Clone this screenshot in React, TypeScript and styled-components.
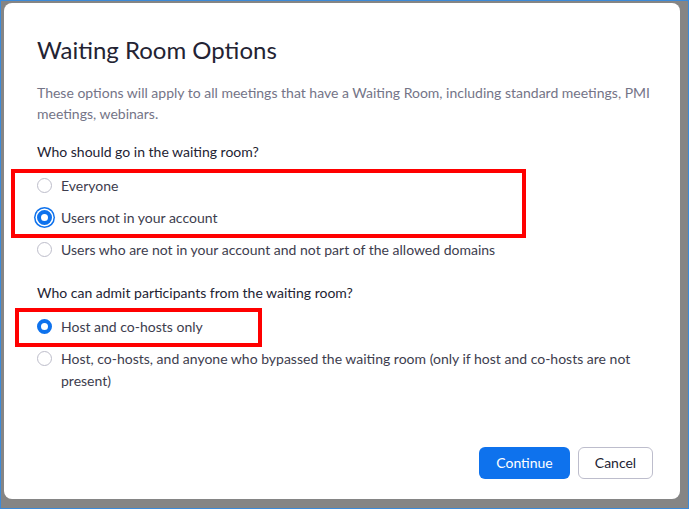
import styled, { createGlobalStyle } from "styled-components";

const GlobalStyle = createGlobalStyle`
  html, body {
    margin: 0;
    padding: 0;
  }
  body {
    font-family: Lato, "Open Sans", "Liberation Sans", sans-serif;
  }
`;

type Option = {
  label: string;
  checked?: boolean;
  focused?: boolean;
};

const waitingOptions: Option[] = [
  { label: "Everyone" },
  { label: "Users not in your account", checked: true, focused: true },
  { label: "Users who are not in your account and not part of the allowed domains" },
];

const admitOptions: Option[] = [
  { label: "Host and co-hosts only", checked: true },
  {
    label:
      "Host, co-hosts, and anyone who bypassed the waiting room (only if host and co-hosts are not present)",
  },
];

const App = () => {
  return (
    <>
      <GlobalStyle />
      <Frame>
        <Dialog>
          <Title>Waiting Room Options</Title>
          <Description>
            These options will apply to all meetings that have a Waiting Room, including standard
            meetings, PMI meetings, webinars.
          </Description>

          <SectionTitle>Who should go in the waiting room?</SectionTitle>
          <OptionList>
            {waitingOptions.map((o) => (
              <OptionRow key={o.label}>
                <Radio $checked={o.checked} $focused={o.focused} />
                <OptionText>{o.label}</OptionText>
              </OptionRow>
            ))}
          </OptionList>

          <SectionTitle $spaced>Who can admit participants from the waiting room?</SectionTitle>
          <OptionList>
            {admitOptions.map((o) => (
              <OptionRow key={o.label}>
                <Radio $checked={o.checked} $focused={o.focused} />
                <OptionText>{o.label}</OptionText>
              </OptionRow>
            ))}
          </OptionList>

          <Footer>
            <PrimaryButton>Continue</PrimaryButton>
            <SecondaryButton>Cancel</SecondaryButton>
          </Footer>

          {/* 빨간 강조 박스 (스크린샷 주석) */}
          <Highlight $left={7} $top={166} $width={515} $height={69} />
          <Highlight $left={11} $top={305} $width={247} $height={39} />
        </Dialog>
      </Frame>
    </>
  );
};

const Frame = styled.div`
  width: 689px;
  height: 509px;
  box-sizing: border-box;
  border: 1px solid #3c8ad8;
  background: #858585;
  padding: 2px 8px 9px 3px;
  display: flex;
`;

const Dialog = styled.div`
  position: relative;
  flex: 1;
  display: flex;
  flex-direction: column;
  background: #ffffff;
  border-radius: 8px;
  padding: 31.5px 27px 20px 33px;
  box-sizing: border-box;
`;

const Title = styled.h1`
  margin: 0;
  font-size: 24px;
  line-height: 30px;
  font-weight: 400;
  color: #232333;
`;

const Description = styled.p`
  margin: 17px 0 0;
  font-size: 14px;
  line-height: 21px;
  color: #747487;
`;

const SectionTitle = styled.h2<{ $spaced?: boolean }>`
  margin: ${({ $spaced }) => ($spaced ? "16.5px" : "18px")} 0 0;
  font-size: 14px;
  line-height: 20px;
  font-weight: 400;
  color: #232333;
`;

const OptionList = styled.div`
  display: flex;
  flex-direction: column;
  margin-top: 8.5px;
`;

const OptionRow = styled.label`
  display: flex;
  align-items: flex-start;
  gap: 9px;
  padding: 5px 0;
`;

const Radio = styled.span<{ $checked?: boolean; $focused?: boolean }>`
  flex: none;
  width: 15px;
  height: 15px;
  margin-top: 2.5px;
  box-sizing: border-box;
  border-radius: 50%;
  background: #ffffff;
  border: ${({ $checked }) => ($checked ? "4.5px solid #0e72ed" : "1px solid #bdbdca")};
  box-shadow: ${({ $focused }) =>
    $focused ? "0 0 0 1.5px #ffffff, 0 0 0 3px #0e72ed" : "none"};
`;

const OptionText = styled.span`
  font-size: 14px;
  line-height: 22px;
  color: #3d3d4e;
`;

const Footer = styled.div`
  margin-top: auto;
  display: flex;
  justify-content: flex-end;
  gap: 8px;
`;

const PrimaryButton = styled.button`
  width: 91px;
  height: 32px;
  padding: 0 0 2px;
  border: none;
  border-radius: 6px;
  background: #0e72ed;
  color: #ffffff;
  font-family: inherit;
  font-size: 14px;
`;

const SecondaryButton = styled.button`
  width: 75px;
  height: 32px;
  padding: 0 0 2px;
  border: 1px solid #bdbdcc;
  border-radius: 6px;
  background: #ffffff;
  color: #232333;
  font-family: inherit;
  font-size: 14px;
`;

const Highlight = styled.div<{ $left: number; $top: number; $width: number; $height: number }>`
  position: absolute;
  left: ${({ $left }) => $left}px;
  top: ${({ $top }) => $top}px;
  width: ${({ $width }) => $width}px;
  height: ${({ $height }) => $height}px;
  box-sizing: border-box;
  border: 4px solid #ff0000;
  pointer-events: none;
`;

export default App;
